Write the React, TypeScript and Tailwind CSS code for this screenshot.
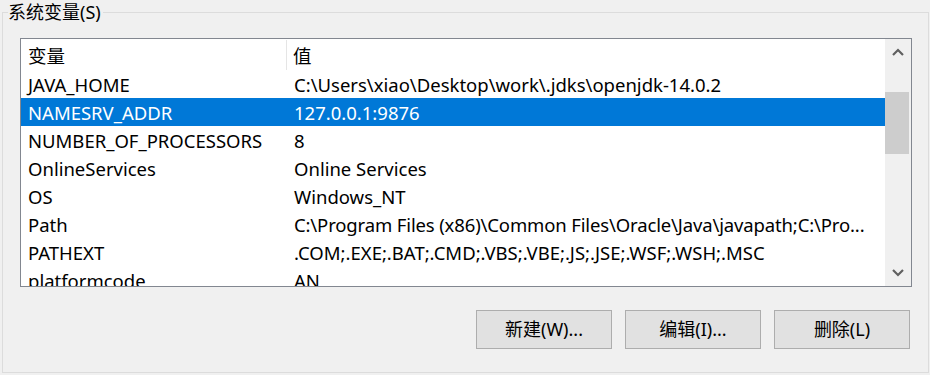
import React from "react";

const rows: [string, string][] = [
  ["JAVA_HOME", "C:\\Users\\xiao\\Desktop\\work\\.jdks\\openjdk-14.0.2"],
  ["NAMESRV_ADDR", "127.0.0.1:9876"],
  ["NUMBER_OF_PROCESSORS", "8"],
  ["OnlineServices", "Online Services"],
  ["OS", "Windows_NT"],
  ["Path", "C:\\Program Files (x86)\\Common Files\\Oracle\\Java\\javapath;C:\\Pro..."],
  ["PATHEXT", ".COM;.EXE;.BAT;.CMD;.VBS;.VBE;.JS;.JSE;.WSF;.WSH;.MSC"],
  ["platformcode", "AN"],
];

const SELECTED = 1;

function Chevron({ up }: { up?: boolean }) {
  return (
    <svg width="12" height="8" viewBox="0 0 12 8" fill="none">
      <path
        d={up ? "M1 7 L6 2 L11 7" : "M1 1 L6 6 L11 1"}
        stroke="#606060"
        strokeWidth="2.2"
      />
    </svg>
  );
}

function Button({ label }: { label: string }) {
  return (
    <button className="w-[136px] h-[39px] bg-[#e1e1e1] border border-[#adadad] text-[18px] text-black flex items-center justify-center">
      {label}
    </button>
  );
}

export default function App() {
  return (
    <div
      className="w-[930px] h-[375px] bg-[#f0f0f0] overflow-hidden"
      style={{ fontFamily: '"Noto Sans", "Noto Sans CJK SC", sans-serif' }}
    >
      <fieldset className="ml-[2px] w-[927px] h-[373px] border border-[#dcdcdc] pl-[17px] pr-[16px] pt-[14px] m-0">
        <legend className="-ml-[12px] pr-[2px] text-[18px] leading-[24px] text-black">系统变量(S)</legend>

        <div className="h-[249px] border border-[#828790] bg-white flex overflow-hidden">
          <div className="flex-1 flex flex-col text-[18.5px] text-black">
            <div className="grid grid-cols-[266px_1fr] h-[31px] shrink-0">
              <div className="pl-[7px] pt-[2px] flex items-center border-r border-[#e5e5e5] my-[1px]">变量</div>
              <div className="pl-[6px] pt-[2px] flex items-center">值</div>
            </div>
            {rows.map(([name, value], i) => (
              <div
                key={name}
                className={
                  i === SELECTED
                    ? "grid grid-cols-[266px_1fr] h-[28px] shrink-0 items-center pt-[2px] bg-[#0078d7] text-white"
                    : "grid grid-cols-[266px_1fr] h-[28px] shrink-0 items-center pt-[2px]"
                }
              >
                <div className="pl-[7px] whitespace-nowrap overflow-hidden">{name}</div>
                <div
                  className={
                    name === "Path"
                      ? "pl-[7px] whitespace-nowrap overflow-hidden tracking-[-0.14px]"
                      : "pl-[7px] whitespace-nowrap overflow-hidden"
                  }
                >
                  {value}
                </div>
              </div>
            ))}
          </div>

          <div className="w-[26px] shrink-0 bg-[#f0f0f0] flex flex-col">
            <div className="h-[26px] flex items-center justify-center">
              <Chevron up />
            </div>
            <div className="flex-1">
              <div className="mt-[27px] h-[62px] mr-[2px] bg-[#cdcdcd]" />
            </div>
            <div className="h-[27px] flex items-center justify-center">
              <Chevron />
            </div>
          </div>
        </div>

        <div className="flex justify-end gap-[13px] mt-[23px] mr-[2px]">
          <Button label="新建(W)..." />
          <Button label="编辑(I)..." />
          <Button label="删除(L)" />
        </div>
      </fieldset>
    </div>
  );
}
